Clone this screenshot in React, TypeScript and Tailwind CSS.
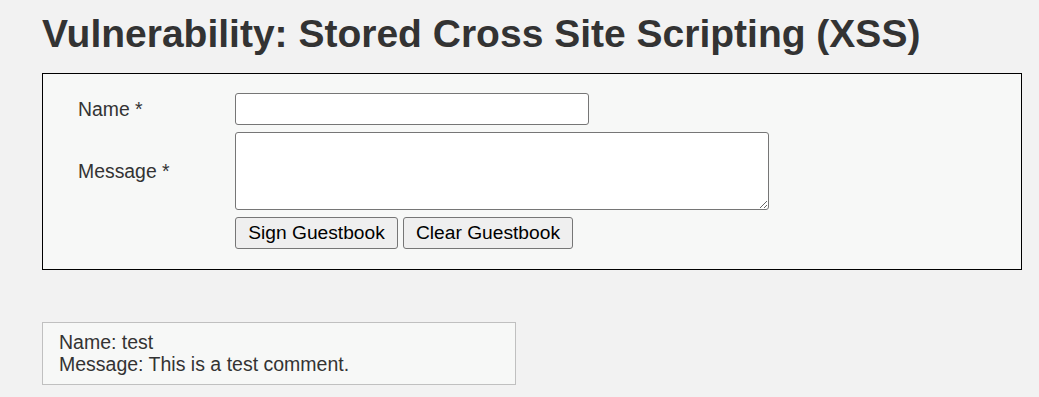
export default function App() {
  return (
    <div className="min-h-screen w-full bg-[#f2f2f2] pl-[42px] pt-[12px] font-['Liberation_Sans',Arial,sans-serif] text-[#333]">
      <h1 className="text-[39px] leading-[1.15] font-bold text-[#333]">
        Vulnerability: Stored Cross Site Scripting (XSS)
      </h1>

      {/* Form area */}
      <div className="mt-[16px] w-[980px] border border-black bg-[#f7f8f7] pt-[19px] pb-[20px] pl-[35px]">
        <form className="flex flex-col gap-[7px]" onSubmit={(e) => e.preventDefault()}>
          <div className="flex items-center">
            <label className="w-[157px] text-[19.4px] leading-[22px] text-[#333]">Name *</label>
            <input
              type="text"
              className="h-[32px] w-[354px] rounded-[3px] border border-[#767676] bg-white px-1 text-[16px] outline-none"
            />
          </div>
          <div className="flex items-center">
            <label className="w-[157px] text-[19.4px] leading-[22px] text-[#333]">Message *</label>
            <textarea className="block h-[78px] w-[534px] rounded-[3px] border border-[#767676] bg-white px-1 text-[16px] outline-none" />
          </div>
          <div className="flex gap-[5px] pl-[157px]">
            <button
              type="submit"
              className="h-[32px] w-[163px] rounded-[3px] border border-[#767676] bg-[#efefef] text-[19.2px] leading-[22px] text-black"
            >
              Sign Guestbook
            </button>
            <button
              type="button"
              className="h-[32px] w-[170px] rounded-[3px] border border-[#767676] bg-[#efefef] text-[19.2px] leading-[22px] text-black"
            >
              Clear Guestbook
            </button>
          </div>
        </form>
      </div>

      {/* Guestbook comments */}
      <div className="mt-[52px] w-[474px] border border-[#c0c0c0] bg-[#f7f8f7] pt-[8px] pb-[9px] pl-[16px] text-[19.5px] leading-[22px] text-[#333]">
        <div>Name: test</div>
        <div>Message: This is a test comment.</div>
      </div>
    </div>
  );
}
